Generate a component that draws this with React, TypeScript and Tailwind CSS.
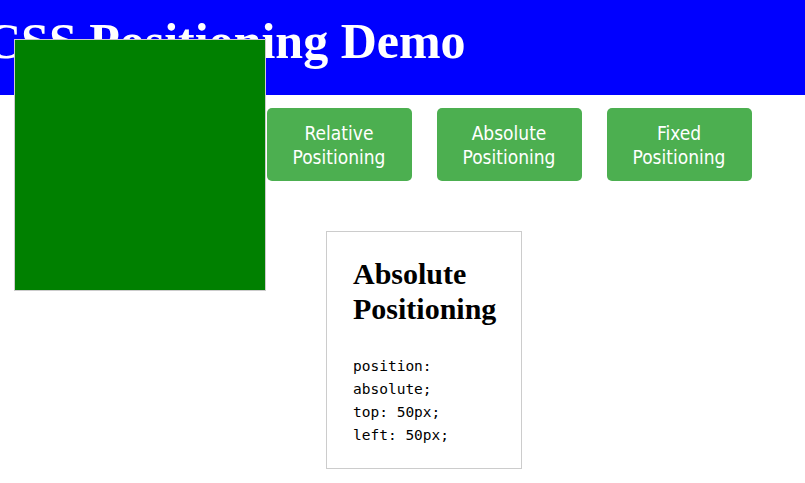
const buttons = [
  "Static Positioning",
  "Relative Positioning",
  "Absolute Positioning",
  "Fixed Positioning",
];

export default function App() {
  return (
    <div className="relative min-h-[483px] bg-white">
      <header className="h-[95px] overflow-hidden bg-[#0000ff] pt-[16px]">
        <h1 className="ml-[-15px] whitespace-nowrap font-['Liberation_Serif',serif] text-[50px] font-bold leading-none text-white">
          CSS Positioning Demo
        </h1>
      </header>

      <div className="pl-[43px]">
        <nav className="mt-[13px] flex justify-center gap-[25px]">
          {buttons.map((b) => (
            <button
              key={b}
              className="flex h-[73px] w-[145px] items-center justify-center rounded-[5px] bg-[#4caf50] px-[8px] text-center font-['DejaVu_Sans_Condensed','DejaVu_Sans',sans-serif] text-[19px] leading-[24px] text-white"
            >
              {b}
            </button>
          ))}
        </nav>

        <div className="mt-[50px] flex justify-center">
          <div className="w-[196px] border border-[#cccccc] py-[25px] pb-[21px] pl-[26px] pr-[24px]">
            <h2 className="font-['Liberation_Serif',serif] text-[30px] font-bold leading-[34.5px] text-black">
              Absolute Positioning
            </h2>
            <pre className="mt-[29px] whitespace-pre-wrap font-['DejaVu_Sans_Mono',monospace] text-[14.5px] leading-[23px] text-black">
              position: absolute;{"\n"}top: 50px;{"\n"}left: 50px;
            </pre>
          </div>
        </div>
      </div>

      {/* the demo box sits over the header and the first button */}
      <div className="absolute left-[14px] top-[39px] h-[252px] w-[252px] border border-[#cccccc] bg-[#008000]" />
    </div>
  );
}
